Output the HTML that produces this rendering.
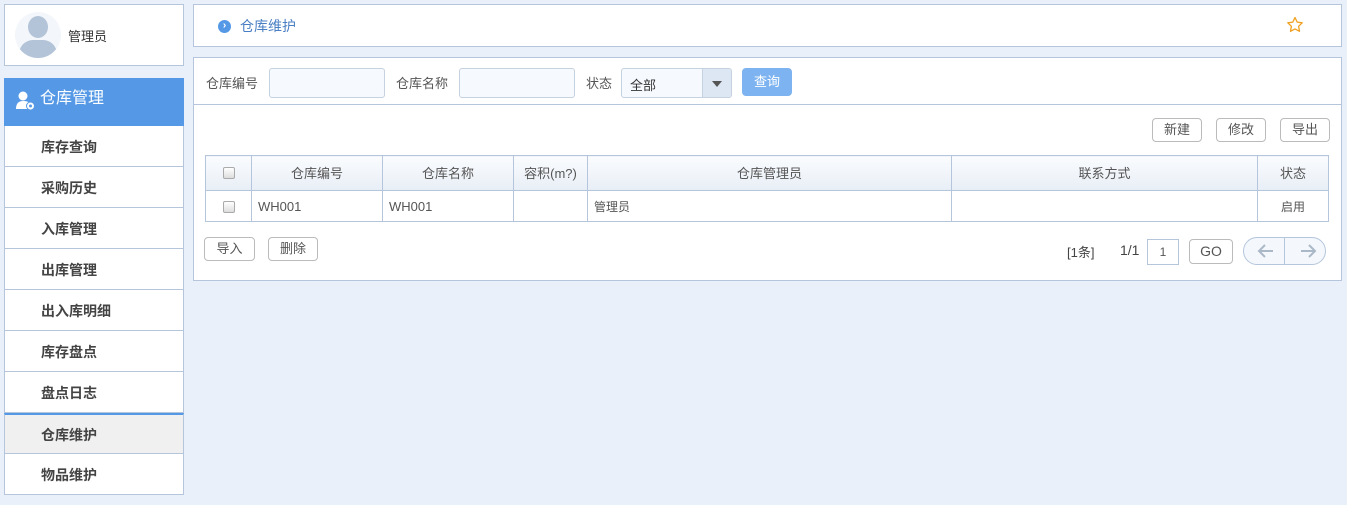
<!DOCTYPE html><html><head><meta charset="utf-8"><style>
*{box-sizing:border-box;margin:0;padding:0}
body{width:1347px;height:505px;background:#e9f0f9;font-family:"Liberation Sans","Noto Sans CJK SC",sans-serif;font-size:13px;color:#555;position:relative;overflow:hidden}
.a{position:absolute}
.box{background:#fff;border:1px solid #b5c6dc}
.mi{position:absolute;left:4px;width:180px;height:41px;background:#fff;border:1px solid #b5c6dc;border-top:none;font-weight:bold;font-size:14px;color:#444;padding-left:36px;line-height:42px}
.btn{position:absolute;border:1px solid #bbb;border-radius:4px;background:#fff;text-align:center;font-size:13px;color:#555;height:24px;line-height:22px}
input{position:absolute;border:1px solid #c6d2e0;border-radius:3px;background:#f6f9fd;height:30px}
table{position:absolute;left:205px;top:155px;width:1124px;border-collapse:collapse}
td,th{border:1px solid #b5c6dc;font-weight:normal;font-size:13px;color:#555}
th{height:35px;background:linear-gradient(#fafcfe,#e8eef6);padding-bottom:2px}
td{height:31px;padding-left:6px}
.cb{display:inline-block;width:12px;height:12px;border:1px solid #aaa;border-radius:2px;background:linear-gradient(#fff,#ddd);vertical-align:middle}
</style></head><body>
<div class="a box" style="left:4px;top:4px;width:180px;height:62px">
<div class="a" style="left:10px;top:7px;width:46px;height:46px;border-radius:50%;background:#f3f6fa;overflow:hidden">
<div class="a" style="left:13px;top:4px;width:20px;height:22px;border-radius:50%;background:#b3c4d9"></div>
<div class="a" style="left:4px;top:28px;width:38px;height:24px;border-radius:14px 14px 0 0;background:#b3c4d9"></div></div>
<div class="a" style="left:63px;top:21px;font-size:13px;color:#333">管理员</div></div>
<div class="a" style="left:4px;top:78px;width:180px;height:48px;background:#5599e6;color:#fff;font-size:16px;line-height:42px;padding-left:36px">仓库管理
<svg class="a" style="left:11px;top:12px" width="22" height="22" viewBox="0 0 22 22"><circle cx="8" cy="6" r="4.5" fill="#fff"/><path d="M1 19c0-6 3-8 7-8s6 1 7 3v5z" fill="#fff"/><circle cx="15.5" cy="16" r="4" fill="#fff" stroke="#5599e6" stroke-width="1"/><circle cx="15.5" cy="16" r="1.5" fill="#5599e6"/></svg></div>
<div class="mi" style="top:126px">库存查询</div>
<div class="mi" style="top:167px">采购历史</div>
<div class="mi" style="top:208px">入库管理</div>
<div class="mi" style="top:249px">出库管理</div>
<div class="mi" style="top:290px">出入库明细</div>
<div class="mi" style="top:331px">库存盘点</div>
<div class="mi" style="top:372px">盘点日志</div>
<div class="mi" style="top:413px;background:#f0f0f0;border-top:2px solid #5599e6;line-height:40px">仓库维护</div>
<div class="mi" style="top:454px">物品维护</div>

<div class="a box" style="left:193px;top:4px;width:1149px;height:43px">
<div class="a" style="left:24px;top:15px;width:13px;height:13px;border-radius:50%;background:#5599e6;color:#fff;font-size:10px;line-height:12px;text-align:center;font-weight:bold">›</div>
<div class="a" style="left:46px;top:11px;color:#4a7fc4;font-size:14px">仓库维护</div>
<svg class="a" style="left:1092px;top:11px" width="18" height="18" viewBox="0 0 18 18"><path d="M9 1.5l2.2 4.6 5 .7-3.6 3.5.9 5-4.5-2.4-4.5 2.4.9-5L1.8 6.8l5-.7z" fill="none" stroke="#f0a020" stroke-width="1.3" stroke-linejoin="round"/></svg></div>

<div class="a box" style="left:193px;top:57px;width:1149px;height:224px"></div>
<div class="a" style="left:194px;top:104px;width:1147px;height:1px;background:#b5c6dc"></div>
<div class="a" style="left:206px;top:73px">仓库编号</div>
<input style="left:269px;top:68px;width:116px">
<div class="a" style="left:396px;top:73px">仓库名称</div>
<input style="left:459px;top:68px;width:116px">
<div class="a" style="left:586px;top:73px">状态</div>
<div class="a" style="left:621px;top:68px;width:111px;height:30px;border:1px solid #c6d2e0;border-radius:3px;background:#f6f9fd;overflow:hidden">
<div class="a" style="left:8px;top:6px;font-size:13px;color:#333">全部</div>
<div class="a" style="left:80px;top:0;width:30px;height:28px;background:#dde7f3;border-left:1px solid #c6d2e0"></div>
<div class="a" style="left:90px;top:12px;border:5px solid transparent;border-top:6px solid #555;border-bottom:0"></div></div>
<div class="a" style="left:742px;top:68px;width:50px;height:28px;border-radius:4px;background:#7db3f0;color:#fff;text-align:center;line-height:27px">查询</div>

<div class="btn" style="left:1152px;top:118px;width:50px">新建</div>
<div class="btn" style="left:1216px;top:118px;width:50px">修改</div>
<div class="btn" style="left:1280px;top:118px;width:50px">导出</div>

<table><tr><th style="width:46px"><span class="cb"></span></th><th style="width:131px">仓库编号</th><th style="width:131px">仓库名称</th><th style="width:74px">容积(m?)</th><th style="width:364px">仓库管理员</th><th style="width:306px">联系方式</th><th>状态</th></tr>
<tr><td style="padding:0;text-align:center"><span class="cb"></span></td><td>WH001</td><td>WH001</td><td></td><td style="font-size:12px">管理员</td><td></td><td style="padding:0;text-align:center;font-size:12px">启用</td></tr></table>

<div class="btn" style="left:204px;top:237px;width:51px">导入</div>
<div class="btn" style="left:268px;top:237px;width:50px">删除</div>
<div class="a" style="left:1067px;top:242px;color:#444">[1条]</div>
<div class="a" style="left:1120px;top:242px;color:#444;font-size:14px">1/1</div>
<div class="a" style="left:1147px;top:239px;width:32px;height:26px;border:1px solid #b5c6dc;text-align:center;line-height:24px;font-size:12px">1</div>
<div class="btn" style="left:1189px;top:239px;width:44px;height:25px;line-height:23px;font-size:14px">GO</div>
<div class="a" style="left:1243px;top:237px;width:83px;height:28px;border:1px solid #b5c6dc;border-radius:14px;background:#f4f7fb"></div>
<div class="a" style="left:1284px;top:238px;width:1px;height:26px;background:#b5c6dc"></div>
<svg class="a" style="left:1256px;top:243px" width="62" height="16" viewBox="0 0 62 16"><path d="M3 8h14M9 2L3 8l6 6M45 8h14M53 2l6 6-6 6" fill="none" stroke="#aab8c8" stroke-width="2"/></svg>
</body></html>
